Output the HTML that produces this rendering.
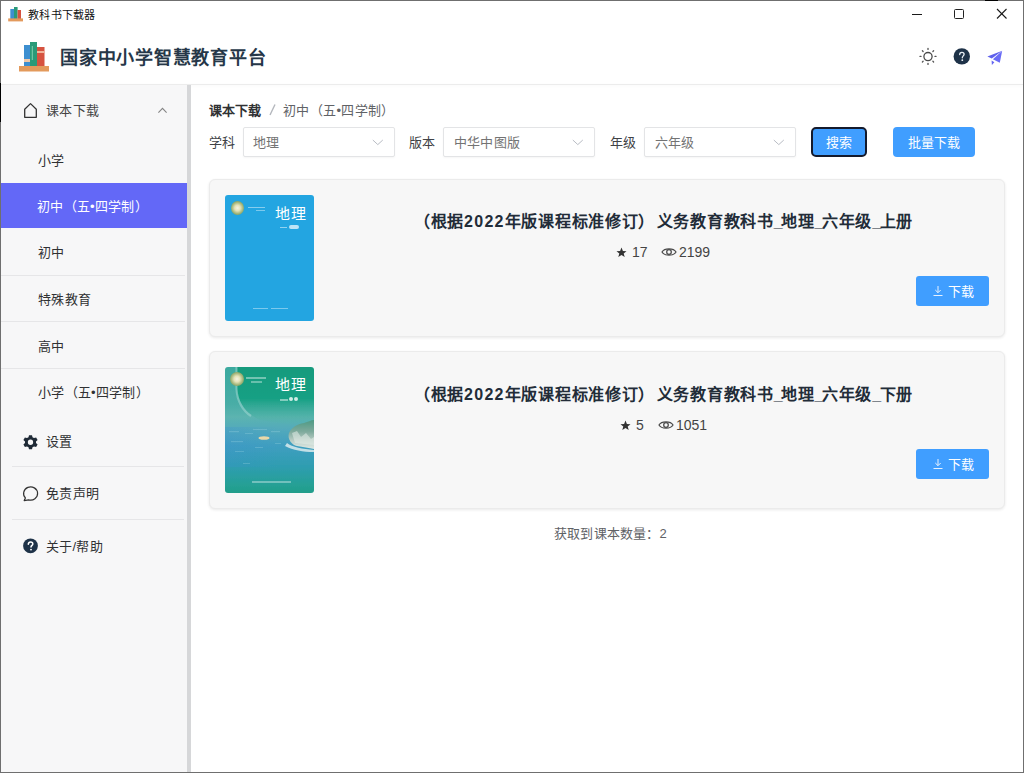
<!DOCTYPE html>
<html lang="zh-CN">
<head>
<meta charset="utf-8">
<style>
*{box-sizing:border-box;margin:0;padding:0}
html,body{width:1024px;height:773px;overflow:hidden;background:#fff}
body{font-family:"Liberation Sans",sans-serif;position:relative;color:#303133}
.abs{position:absolute}
#win{position:absolute;left:0;top:0;width:1024px;height:773px;background:#fff}
#bd{position:absolute;left:0;top:0;width:1024px;height:773px;border:1px solid #6f6f6f;pointer-events:none;z-index:50}
#title{position:absolute;left:28px;top:6px;font-size:11px;letter-spacing:0.3px;color:#111;line-height:18px;white-space:nowrap}
#hline{position:absolute;left:1px;top:84px;width:1022px;height:1px;background:#ececec;box-shadow:0 1px 3px rgba(0,0,0,.05)}
#htext{position:absolute;left:60px;top:45px;font-size:18px;letter-spacing:0.75px;font-weight:bold;color:#263748;line-height:26px;white-space:nowrap}
#side{position:absolute;left:1px;top:85px;width:186px;height:687px;background:#f7f7f8}
#sideborder{position:absolute;left:187px;top:85px;width:4px;height:687px;background:#d6d7d9}
.t{position:absolute;white-space:nowrap;line-height:20px}
.mi{font-size:13px;color:#303133;letter-spacing:0.25px}
.sep{position:absolute;height:1px;background:#e6e6e8}
.sel{position:absolute;top:127px;height:30px;border:1px solid #e3e4e6;border-radius:2px;background:#fff;box-shadow:0 1px 2px rgba(0,0,0,.04)}
.sel svg{position:absolute;right:10px;top:11px}
.lbl{font-size:13px;color:#404246;letter-spacing:0.2px}
.btn{position:absolute;background:#409eff;border-radius:4px}
.card{position:absolute;left:209px;width:796px;background:#f7f7f7;border:1px solid #ebebeb;border-radius:6px;box-shadow:0 1px 3px rgba(0,0,0,0.09)}
.ttl{letter-spacing:0.7px;font-size:16px;font-weight:bold;color:#222c38}
.stat{font-size:14px;color:#444}
.cover{position:absolute;left:225px;width:89px;height:126px;border-radius:3px;overflow:hidden}
</style>
</head>
<body>
<div id="win">
  <!-- title bar -->
  <svg class="abs" style="left:8px;top:6px" width="16" height="16" viewBox="0 0 16 16">
    <rect x="2.3" y="3" width="3.7" height="10" fill="#3d8fd0"/>
    <rect x="6" y="1" width="3.6" height="12" fill="#2a9a78"/>
    <rect x="9.6" y="4" width="3.4" height="9" fill="#d65340"/>
    <rect x="0.2" y="12.4" width="14.8" height="3" fill="#e39a5c"/>
  </svg>
  <div id="title" class="t">教科书下载器</div>
  <svg class="abs" style="left:900px;top:4px" width="120" height="22" viewBox="0 0 120 22">
    <line x1="12" y1="10.5" x2="22" y2="10.5" stroke="#1a1a1a" stroke-width="1"/>
    <rect x="54.5" y="5.5" width="9" height="9" rx="1" fill="none" stroke="#222" stroke-width="1"/>
    <line x1="97" y1="5" x2="106.5" y2="14.5" stroke="#1a1a1a" stroke-width="1.1"/>
    <line x1="106.5" y1="5" x2="97" y2="14.5" stroke="#1a1a1a" stroke-width="1.1"/>
  </svg>

  <!-- header -->
  <svg class="abs" style="left:19px;top:41px" width="31" height="31" viewBox="0 0 31 31">
    <rect x="5" y="4" width="6" height="21" fill="#3d8fd0"/>
    <rect x="11" y="1" width="7" height="24" fill="#2a9a78"/>
    <rect x="12.8" y="5" width="1" height="14" fill="#7fd0b0"/>
    <rect x="18" y="6" width="7.5" height="19" fill="#d65340"/>
    <rect x="18" y="10" width="7.5" height="2" fill="#f1b49a"/>
    <rect x="5" y="18" width="6" height="3" fill="#f0c8a8"/>
    <rect x="0" y="25" width="30" height="5.5" fill="#e39a5c"/>
  </svg>
  <div id="htext" class="t">国家中小学智慧教育平台</div>
  <!-- sun -->
  <svg class="abs" style="left:918px;top:46px" width="20" height="20" viewBox="0 0 20 20">
    <circle cx="10" cy="10.6" r="4.1" fill="none" stroke="#4a4a4a" stroke-width="1.3"/>
    <g stroke="#555" stroke-width="1.3" stroke-linecap="round">
      <line x1="10" y1="2.4" x2="10" y2="3.4"/><line x1="10" y1="17.4" x2="10" y2="18.4"/>
      <line x1="2" y1="10.4" x2="3" y2="10.4"/><line x1="17" y1="10.4" x2="18" y2="10.4"/>
      <line x1="4.4" y1="4.8" x2="5.1" y2="5.5"/><line x1="14.9" y1="15.3" x2="15.6" y2="16"/>
      <line x1="15.6" y1="4.8" x2="14.9" y2="5.5"/><line x1="5.1" y1="15.3" x2="4.4" y2="16"/>
    </g>
  </svg>
  <!-- help -->
  <svg class="abs" style="left:953px;top:48px" width="18" height="18" viewBox="0 0 18 18">
    <circle cx="8.8" cy="8.4" r="8.2" fill="#1e3248"/>
    <path d="M6.7 6.6 C6.7 5 7.7 4.3 8.9 4.3 C10.2 4.3 11.1 5.1 11.1 6.3 C11.1 7.8 9.3 8 9.3 9.8" fill="none" stroke="#e8eef4" stroke-width="1.35" stroke-linecap="round"/>
    <circle cx="9.3" cy="12.2" r="0.9" fill="#e8eef4"/>
  </svg>
  <!-- plane -->
  <svg class="abs" style="left:986px;top:49px" width="18" height="18" viewBox="0 0 18 18">
    <path d="M1.4 7.6 L16.2 1.8 L5.8 9.4 Z" fill="#5f61ec"/>
    <path d="M6.9 10.2 L16.2 1.8 L13.8 13.8 Z" fill="#6a6cf6"/>
    <path d="M5.6 11.4 L8.4 13.2 L5.9 15.9 Z" fill="#6466f1"/>
  </svg>
  <div id="hline"></div>

  <!-- sidebar -->
  <div id="side"></div>
  <div id="sideborder"></div>
  <svg class="abs" style="left:23px;top:102px" width="16" height="17" viewBox="0 0 16 17">
    <path d="M1.7 7.2 L7.5 1.6 L13.3 7.2 L13.3 15.3 L1.7 15.3 Z" fill="none" stroke="#333" stroke-width="1.3" stroke-linejoin="round"/>
  </svg>
  <div class="t mi" style="left:46px;top:101px;color:#454545">课本下载</div>
  <svg class="abs" style="left:156px;top:105px" width="13" height="10" viewBox="0 0 13 10">
    <path d="M2.4 7.6 L6.5 3.4 L10.6 7.6" fill="none" stroke="#858585" stroke-width="1.1"/>
  </svg>

  <div class="t mi" style="left:38px;top:151px">小学</div>
  <div class="abs" style="left:1px;top:183px;width:186px;height:45px;background:#6368f7"></div>
  <div class="t mi" style="left:37px;top:197px;color:#fff">初中（五•四学制）</div>
  <div class="t mi" style="left:38px;top:243px">初中</div>
  <div class="sep" style="left:1px;top:275px;width:184px"></div>
  <div class="t mi" style="left:38px;top:290px">特殊教育</div>
  <div class="sep" style="left:1px;top:321px;width:184px"></div>
  <div class="t mi" style="left:38px;top:337px">高中</div>
  <div class="sep" style="left:1px;top:368px;width:184px"></div>
  <div class="t mi" style="left:38px;top:383px">小学（五•四学制）</div>

  <svg class="abs" style="left:22px;top:434px" width="17" height="17" viewBox="0 0 17 17">
    <path fill="#1f2a36" fill-rule="evenodd" d="M7 1.2 H10 L10.5 3.3 L12 4.1 L14.1 3.4 L15.6 5.9 L14 7.4 V9.1 L15.6 10.6 L14.1 13.1 L12 12.4 L10.5 13.2 L10 15.3 H7 L6.5 13.2 L5 12.4 L2.9 13.1 L1.4 10.6 L3 9.1 V7.4 L1.4 5.9 L2.9 3.4 L5 4.1 L6.5 3.3 Z M8.5 5.6 A2.65 2.65 0 1 0 8.5 10.9 A2.65 2.65 0 1 0 8.5 5.6 Z"/>
  </svg>
  <div class="t mi" style="left:46px;top:432px">设置</div>
  <div class="sep" style="left:12px;top:466px;width:172px"></div>
  <svg class="abs" style="left:22px;top:485px" width="18" height="18" viewBox="0 0 18 18">
    <path d="M3.4 12.9 A7 6.6 0 1 1 6.6 14.8 L2.2 15.6 Z" fill="none" stroke="#333" stroke-width="1.2" stroke-linejoin="round"/>
  </svg>
  <div class="t mi" style="left:46px;top:484px">免责声明</div>
  <div class="sep" style="left:12px;top:519px;width:172px"></div>
  <svg class="abs" style="left:22px;top:538px" width="17" height="16" viewBox="0 0 17 16">
    <circle cx="8.5" cy="7.8" r="7.4" fill="#1e3248"/>
    <path d="M6.3 6.2 C6.3 4.6 7.3 3.9 8.6 3.9 C9.9 3.9 10.8 4.7 10.8 5.9 C10.8 7.3 9 7.5 9 9.1" fill="none" stroke="#fff" stroke-width="1.5" stroke-linecap="round"/>
    <circle cx="9" cy="11.6" r="0.95" fill="#fff"/>
  </svg>
  <div class="t mi" style="left:46px;top:537px">关于/帮助</div>

  <!-- main -->
  <div class="t" style="left:209px;top:101px;font-size:13px;font-weight:bold;color:#303133">课本下载</div>
  <svg class="abs" style="left:268px;top:103px" width="9" height="14" viewBox="0 0 9 14"><line x1="7" y1="1.5" x2="2" y2="12" stroke="#b4b7bd" stroke-width="1.4"/></svg>
  <div class="t" style="left:283px;top:101px;font-size:13px;color:#606266;letter-spacing:0.35px">初中（五•四学制）</div>

  <div class="t lbl" style="left:209px;top:133px">学科</div>
  <div class="sel" style="left:243px;width:152px"><svg width="12" height="7" viewBox="0 0 12 7"><path d="M0.8 1 L5.8 5.6 L10.8 1" fill="none" stroke="#b8bcc4" stroke-width="1"/></svg></div>
  <div class="t lbl" style="left:253px;top:133px;color:#737373">地理</div>
  <div class="t lbl" style="left:409px;top:133px">版本</div>
  <div class="sel" style="left:443px;width:152px"><svg width="12" height="7" viewBox="0 0 12 7"><path d="M0.8 1 L5.8 5.6 L10.8 1" fill="none" stroke="#b8bcc4" stroke-width="1"/></svg></div>
  <div class="t lbl" style="left:454px;top:133px;color:#737373">中华中图版</div>
  <div class="t lbl" style="left:610px;top:133px">年级</div>
  <div class="sel" style="left:644px;width:152px"><svg width="12" height="7" viewBox="0 0 12 7"><path d="M0.8 1 L5.8 5.6 L10.8 1" fill="none" stroke="#b8bcc4" stroke-width="1"/></svg></div>
  <div class="t lbl" style="left:655px;top:133px;color:#737373">六年级</div>

  <div class="btn" style="left:811px;top:127px;width:56px;height:30px;border:2px solid #141a2c;border-radius:5px"></div>
  <div class="t" style="left:826px;top:133px;font-size:13px;font-weight:500;color:#fff">搜索</div>
  <div class="btn" style="left:893px;top:127px;width:82px;height:30px"></div>
  <div class="t" style="left:908px;top:133px;font-size:13px;font-weight:500;color:#fff">批量下载</div>

  <!-- card 1 -->
  <div class="card" style="top:179px;height:158px"></div>
  <div class="cover" style="top:195px;background:#23a5e1">
    <div class="abs" style="left:6px;top:6px;width:13px;height:14px;border-radius:50%;background:radial-gradient(circle at 50% 50%,#f4f4e4 0,#e4e2b8 30%,#a0b478 60%,#7d9a5c 80%,#c0cc9c 100%)"></div>
    <div class="abs" style="left:23px;top:12px;width:17px;height:1px;background:rgba(255,255,255,.45)"></div>
    <div class="abs" style="left:31px;top:15px;width:9px;height:1px;background:rgba(255,255,255,.4)"></div>
    <div class="t" style="left:50px;top:9px;font-size:15px;font-weight:300;letter-spacing:0.5px;color:#fff;line-height:20px">地理</div>
    <div class="abs" style="left:55px;top:32px;width:7px;height:1px;background:rgba(255,255,255,.5)"></div>
    <div class="abs" style="left:64px;top:30px;width:10px;height:4px;border-radius:2px;background:rgba(255,255,255,.7)"></div>
    <div class="abs" style="left:28px;top:113px;width:15px;height:1px;background:rgba(255,255,255,.4)"></div>
    <div class="abs" style="left:46px;top:113px;width:17px;height:1px;background:rgba(255,255,255,.4)"></div>
  </div>
  <div class="t ttl" style="left:414px;top:212px">（根据<span style="letter-spacing:1.25px">2022</span>年版课程标准修订<span style="letter-spacing:2.4px">）</span>义务教育教科书<span style="letter-spacing:-1.4px">_</span>地理<span style="letter-spacing:-1.4px">_</span>六年级<span style="letter-spacing:-1.4px">_</span>上册</div>
  <svg class="abs" style="left:616px;top:247px" width="11" height="11" viewBox="0 0 11 11"><path d="M5.5 0.6 L6.9 4 L10.5 4.2 L7.7 6.5 L8.7 10 L5.5 8 L2.3 10 L3.3 6.5 L0.5 4.2 L4.1 4 Z" fill="#333"/></svg>
  <div class="t stat" style="left:632px;top:242px">17</div>
  <svg class="abs" style="left:661px;top:246px" width="16" height="12" viewBox="0 0 16 12"><path d="M1 6 C3.5 1.8 12.5 1.8 15 6 C12.5 10.2 3.5 10.2 1 6 Z" fill="none" stroke="#4a4a4a" stroke-width="1.25"/><circle cx="8" cy="6" r="2.3" fill="none" stroke="#4a4a4a" stroke-width="1.25"/></svg>
  <div class="t stat" style="left:679px;top:242px">2199</div>
  <div class="btn" style="left:916px;top:276px;width:73px;height:30px;border-radius:3px"></div>
  <svg class="abs" style="left:932px;top:285px" width="12" height="12" viewBox="0 0 12 12"><path d="M6 1 V7.5 M3.3 5 L6 7.7 L8.7 5 M1.5 10.5 H10.5" fill="none" stroke="#e6f1ff" stroke-width="1"/></svg>
  <div class="t" style="left:948px;top:282px;font-size:13px;font-weight:500;color:#fff">下载</div>

  <!-- card 2 -->
  <div class="card" style="top:351px;height:158px"></div>
  <div class="cover" style="top:367px">
    <svg width="89" height="126" viewBox="0 0 89 126" style="position:absolute;left:0;top:0">
      <defs>
        <linearGradient id="g2" x1="0" y1="0" x2="0" y2="1">
          <stop offset="0" stop-color="#3aa99e"/>
          <stop offset="0.30" stop-color="#48ada6"/>
          <stop offset="0.40" stop-color="#5cb4b0"/>
          <stop offset="0.50" stop-color="#52a9bc"/>
          <stop offset="0.62" stop-color="#3f9ec0"/>
          <stop offset="0.78" stop-color="#2e9db0"/>
          <stop offset="0.92" stop-color="#25a094"/>
          <stop offset="1" stop-color="#1f9c86"/>
        </linearGradient>
        <linearGradient id="gin" x1="0" y1="0" x2="0" y2="1">
          <stop offset="0" stop-color="#129a7c"/>
          <stop offset="0.55" stop-color="#17a084"/>
          <stop offset="1" stop-color="#5cb8ae" stop-opacity="0"/>
        </linearGradient>
        <linearGradient id="isl" x1="0" y1="0" x2="0" y2="1">
          <stop offset="0" stop-color="#4e9a84"/>
          <stop offset="0.4" stop-color="#7eaa9c"/>
          <stop offset="0.7" stop-color="#b8ccc4"/>
          <stop offset="1" stop-color="#dfe9e4"/>
        </linearGradient>
        <linearGradient id="seaL" x1="0" y1="0" x2="1" y2="0">
          <stop offset="0" stop-color="#3b8fd0" stop-opacity="0.25"/>
          <stop offset="0.6" stop-color="#3b8fd0" stop-opacity="0"/>
        </linearGradient>
        <filter id="bl" x="-5%" y="-5%" width="110%" height="110%"><feGaussianBlur stdDeviation="0.6"/></filter>
      </defs>
      <g filter="url(#bl)">
      <rect x="-3" y="-3" width="95" height="132" fill="url(#g2)"/>
      <path d="M12 -3 L92 -3 L92 60 C70 58 50 56 36 53 C24 49 12 37 12 20 Z" fill="url(#gin)"/>
      <path d="M11.5 0 L11.5 22 C12 34 18 44 26 49" fill="none" stroke="#b0e0da" stroke-width="2.2" opacity="0.45"/>
      <rect x="0" y="60" width="89" height="40" fill="url(#seaL)"/>
      <g fill="#b0e0ea" opacity="0.25">
        <rect x="4" y="64" width="10" height="1.2"/><rect x="20" y="66" width="8" height="1"/><rect x="6" y="74" width="12" height="1.1"/>
        <rect x="28" y="62" width="14" height="1"/><rect x="46" y="64" width="9" height="1.2"/><rect x="10" y="84" width="9" height="1"/>
        <rect x="30" y="80" width="8" height="1"/><rect x="50" y="76" width="6" height="1"/><rect x="18" y="96" width="7" height="1"/>
      </g>
      <path d="M64 66 C66 61 72 57 79 56 C83 55 86 53 89 53 L89 82 C84 81 78 80 72 79 C67 78 62 72 64 66 Z" fill="url(#isl)"/>
      <path d="M67 66 L72 64 L76 70 L81 66 L86 72 L89 70 L89 78 L70 76 Z" fill="#e4ece8" opacity="0.55"/>
      <path d="M62 76 C67 80 78 82 89 83 L89 85 C78 85 68 83 60 79 Z" fill="#f0f6f4" opacity="0.75"/>
      <ellipse cx="39" cy="71" rx="5.5" ry="1.8" fill="#e8d8a8"/>
      <rect x="27" y="114" width="39" height="2" fill="#fff" opacity="0.35"/>
      </g>
    </svg>
    <div class="abs" style="left:5px;top:5px;width:14px;height:14px;border-radius:50%;background:radial-gradient(circle at 50% 50%,#f4f4e4 0,#e4e2b8 30%,#a0b478 60%,#7d9a5c 80%,#c0cc9c 100%)"></div>
    <div class="abs" style="left:21px;top:10px;width:20px;height:1.5px;background:rgba(255,255,255,.4)"></div>
    <div class="abs" style="left:26px;top:14px;width:11px;height:1.5px;background:rgba(255,255,255,.35)"></div>
    <div class="t" style="left:50px;top:8px;font-size:15px;font-weight:300;letter-spacing:0.5px;color:#fff;line-height:20px">地理</div>
    <div class="abs" style="left:55px;top:32px;width:8px;height:1.5px;background:rgba(255,255,255,.45)"></div>
    <div class="abs" style="left:64px;top:30px;width:4px;height:4px;border-radius:50%;background:rgba(255,255,255,.8)"></div>
    <div class="abs" style="left:69px;top:30px;width:4px;height:4px;border-radius:50%;background:rgba(255,255,255,.8)"></div>
  </div>
  <div class="t ttl" style="left:414px;top:385px">（根据<span style="letter-spacing:1.25px">2022</span>年版课程标准修订<span style="letter-spacing:2.4px">）</span>义务教育教科书<span style="letter-spacing:-1.4px">_</span>地理<span style="letter-spacing:-1.4px">_</span>六年级<span style="letter-spacing:-1.4px">_</span>下册</div>
  <svg class="abs" style="left:620px;top:420px" width="11" height="11" viewBox="0 0 11 11"><path d="M5.5 0.6 L6.9 4 L10.5 4.2 L7.7 6.5 L8.7 10 L5.5 8 L2.3 10 L3.3 6.5 L0.5 4.2 L4.1 4 Z" fill="#333"/></svg>
  <div class="t stat" style="left:636px;top:415px">5</div>
  <svg class="abs" style="left:658px;top:419px" width="16" height="12" viewBox="0 0 16 12"><path d="M1 6 C3.5 1.8 12.5 1.8 15 6 C12.5 10.2 3.5 10.2 1 6 Z" fill="none" stroke="#4a4a4a" stroke-width="1.25"/><circle cx="8" cy="6" r="2.3" fill="none" stroke="#4a4a4a" stroke-width="1.25"/></svg>
  <div class="t stat" style="left:676px;top:415px">1051</div>
  <div class="btn" style="left:916px;top:449px;width:73px;height:30px;border-radius:3px"></div>
  <svg class="abs" style="left:932px;top:458px" width="12" height="12" viewBox="0 0 12 12"><path d="M6 1 V7.5 M3.3 5 L6 7.7 L8.7 5 M1.5 10.5 H10.5" fill="none" stroke="#e6f1ff" stroke-width="1"/></svg>
  <div class="t" style="left:948px;top:455px;font-size:13px;font-weight:500;color:#fff">下载</div>

  <div class="t" style="left:554px;top:524px;font-size:13px;color:#606266;letter-spacing:0.2px">获取到课本数量：2</div>
</div>
<div id="bd"></div>
<div class="abs" style="left:985px;top:0;width:13px;height:1px;background:#000;z-index:51"></div>
<div class="abs" style="left:0;top:83px;width:1px;height:39px;background:#000;z-index:51"></div>
</body>
</html>
